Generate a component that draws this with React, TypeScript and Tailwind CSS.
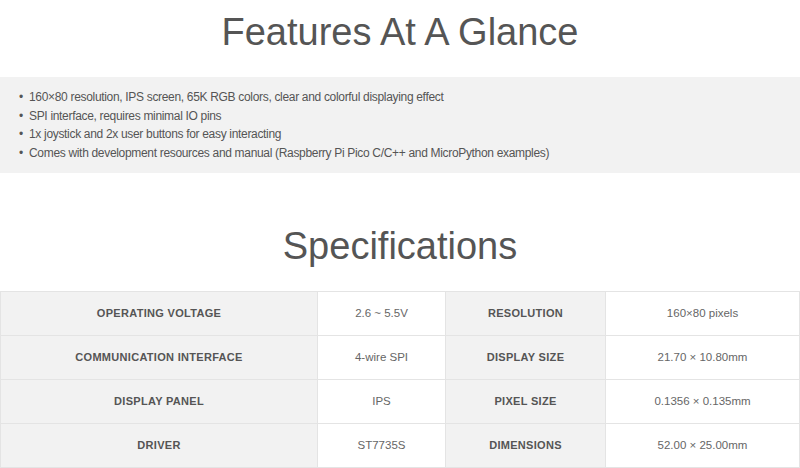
const features = [
  "160×80 resolution, IPS screen, 65K RGB colors, clear and colorful displaying effect",
  "SPI interface, requires minimal IO pins",
  "1x joystick and 2x user buttons for easy interacting",
  "Comes with development resources and manual (Raspberry Pi Pico C/C++ and MicroPython examples)",
]

const specs = [
  ["OPERATING VOLTAGE", "2.6 ~ 5.5V", "RESOLUTION", "160×80 pixels"],
  ["COMMUNICATION INTERFACE", "4-wire SPI", "DISPLAY SIZE", "21.70 × 10.80mm"],
  ["DISPLAY PANEL", "IPS", "PIXEL SIZE", "0.1356 × 0.135mm"],
  ["DRIVER", "ST7735S", "DIMENSIONS", "52.00 × 25.00mm"],
]

function Label({ text }: { text: string }) {
  return (
    <div className="flex h-[44px] items-center justify-center border-r border-b border-[#e4e4e4] bg-[#f2f2f2] text-[11px] font-bold tracking-[0.3px] text-[#555]">
      {text}
    </div>
  )
}

function Value({ text }: { text: string }) {
  return (
    <div className="flex h-[44px] items-center justify-center border-r border-b border-[#e4e4e4] bg-white text-[11.5px] text-[#666]">
      {text}
    </div>
  )
}

export default function App() {
  return (
    <div className="h-[468px] w-[800px] overflow-hidden bg-white font-['Liberation_Sans',Arial,sans-serif]">
      {/* heading */}
      <div className="h-[77px] pt-[13px] text-center text-[38px] leading-[38px] text-[#555]">
        Features At A Glance
      </div>

      {/* feature list band */}
      <div className="h-[96px] bg-[#f2f2f2] pt-[11px]">
        <ul className="pl-[29px] text-[12px] leading-[18.5px] tracking-[-0.32px] text-[#555]">
          {features.map((f) => (
            <li key={f} className="relative">
              <span className="absolute -left-[10px] top-0">•</span>
              {f}
            </li>
          ))}
        </ul>
      </div>

      <div className="pt-[54px] pb-[26px] text-center text-[38px] leading-[38px] text-[#555]">
        Specifications
      </div>

      {/* spec table */}
      <div className="grid grid-cols-[317px_128px_160px_1fr] border-t border-l border-[#e4e4e4]">
        {specs.map((row) => (
          <div key={row[0]} className="contents">
            <Label text={row[0]} />
            <Value text={row[1]} />
            <Label text={row[2]} />
            <Value text={row[3]} />
          </div>
        ))}
      </div>
    </div>
  )
}
